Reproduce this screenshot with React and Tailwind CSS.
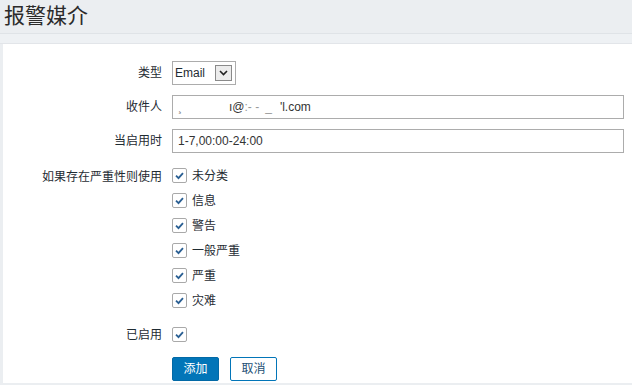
const severities = ["未分类", "信息", "警告", "一般严重", "严重", "灾难"];

function CheckBox() {
  return (
    <span className="flex h-[15px] w-[15px] items-center justify-center rounded-[2px] border border-[#a9a9a9] bg-white">
      <svg width="11" height="11" viewBox="0 0 12 12">
        <path d="M2.2 6.2 L4.9 8.8 L9.8 3.4" fill="none" stroke="#2a5f93" strokeWidth="2" />
      </svg>
    </span>
  );
}

function Row({ label, children, className = "" }) {
  return (
    <div className={`flex items-center ${className}`}>
      <div className="w-[169px] shrink-0 pr-[10px] text-right">{label}</div>
      <div className="flex-1">{children}</div>
    </div>
  );
}

export default function App() {
  return (
    <div
      className="h-[385px] w-[632px] overflow-hidden bg-[#ebeef1] text-[12px] text-[#1f2c33]"
      style={{ fontFamily: '"Liberation Sans", "Noto Sans CJK SC", Arial, sans-serif' }}
    >
      <div className="h-[34px] border-b border-[#dfe3e7] pl-[4px] pt-[2px] text-[21px] leading-[28px] text-[#2b2b2b]">
        报警媒介
      </div>
      <div className="h-[10px] border-b border-[#e2e5e9] bg-[#eef1f4]" />
      <div className="ml-[3px] h-[339px] bg-white pt-[17px]">
        <Row label="类型" className="h-[24px]">
          <div className="flex h-[24px] w-[64px] items-center border border-[#acacac] pl-[2px]">
            <span>Email</span>
            <span className="ml-auto mr-[3px] flex h-[16px] w-[17px] items-center justify-center border border-[#8a8a8a] bg-[#ececec]">
              <svg width="9" height="6" viewBox="0 0 9 6">
                <path d="M1 1 L4.5 4.5 L8 1" fill="none" stroke="#222" strokeWidth="1.6" />
              </svg>
            </span>
          </div>
        </Row>
        <Row label="收件人" className="mt-[10px] h-[24px]">
          <div className="flex h-[24px] w-[452px] items-center border border-[#acacac] pl-[5px] text-[#333]">
            <span className="text-[#888]">¸</span>
            <span className="inline-block w-[47px]" />
            <span>ı@</span>
            <span className="text-[#999]">:- -</span>
            <span className="inline-block w-[6px]" />
            <span className="text-[#999]">_</span>
            <span className="inline-block w-[8px]" />
            <span>'l.com</span>
          </div>
        </Row>
        <Row label="当启用时" className="mt-[10px] h-[24px]">
          <div className="flex h-[24px] w-[452px] items-center border border-[#acacac] pl-[5px] text-[#333]">
            1-7,00:00-24:00
          </div>
        </Row>
        <Row label="如果存在严重性则使用" className="mt-[15px] items-start">
          <div className="flex flex-col gap-[10px]">
            {severities.map((s) => (
              <div key={s} className="flex h-[15px] items-center gap-[5px]">
                <CheckBox />
                <span>{s}</span>
              </div>
            ))}
          </div>
        </Row>
        <Row label="已启用" className="mt-[19px] h-[15px]">
          <CheckBox />
        </Row>
        <div className="ml-[169px] mt-[15px] flex gap-[11px]">
          <button className="h-[24px] w-[47px] rounded-[2px] border border-[#0269a6] bg-[#0275b8] text-white">
            添加
          </button>
          <button className="h-[24px] w-[47px] rounded-[2px] border border-[#0275b8] bg-white text-[#1d4f74]">
            取消
          </button>
        </div>
      </div>
    </div>
  );
}
